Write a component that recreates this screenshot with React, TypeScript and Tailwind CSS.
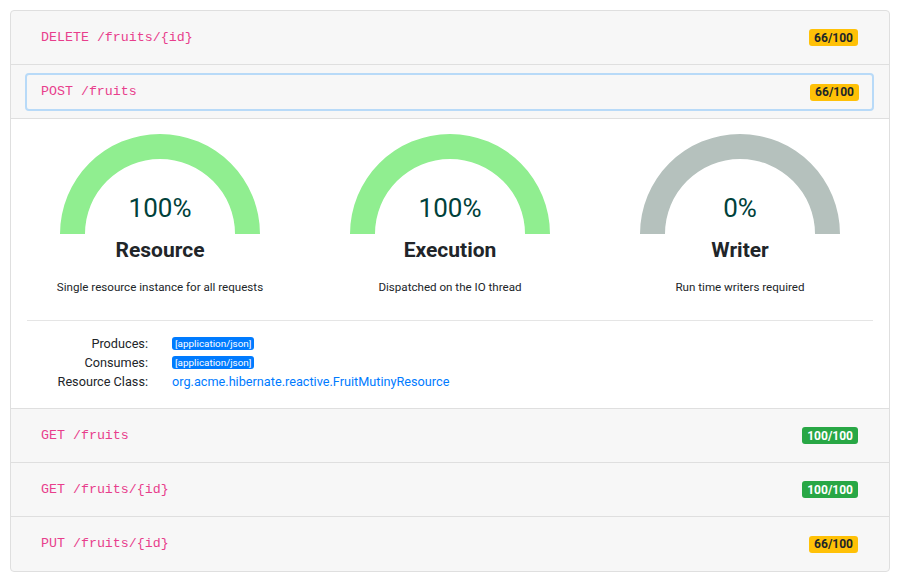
const gauges = [
  { value: 100, title: 'Resource', desc: 'Single resource instance for all requests' },
  { value: 100, title: 'Execution', desc: 'Dispatched on the IO thread' },
  { value: 0, title: 'Writer', desc: 'Run time writers required' },
]

const ok = 'bg-[#28a745] text-white'
const warn = 'bg-[#ffc107] text-[#212529]'

function Score({ score }: { score: number }) {
  return (
    <span
      className={`inline-flex items-center h-[17px] px-[5px] rounded-[3px] text-[12px] font-bold leading-none ${
        score === 100 ? ok : warn
      }`}
    >
      {score}/100
    </span>
  )
}

function Endpoint({ method, path }: { method: string; path: string }) {
  return (
    <code className="text-[13.3px] text-[#e83e8c] font-['Liberation_Mono',monospace]">
      {method} {path}
    </code>
  )
}

function Gauge({ value, title, desc }: { value: number; title: string; desc: string }) {
  return (
    <div className="flex flex-col items-center">
      <div className="relative w-[200px] h-[100px]">
        <svg width="200" height="100" viewBox="0 0 200 100">
          <path
            d="M0,100 A100,100 0 0 1 200,100 L175,100 A75,75 0 0 0 25,100 Z"
            fill={value > 0 ? '#90ee90' : '#b5c1bd'}
          />
        </svg>
        <div className="absolute left-0 right-0 top-[58px] text-center text-[26px] leading-[32px] text-[#00413a]">
          {value}%
        </div>
      </div>
      <div className="mt-[2px] text-[21px] leading-[28px] font-bold text-[#212529]">{title}</div>
      <div className="mt-[15px] text-[11.6px] leading-[16px] text-[#212529]">{desc}</div>
    </div>
  )
}

function Mime() {
  return (
    <span className="bg-[#007bff] text-white text-[9.9px] leading-[13px] px-[3px] rounded-[3px]">
      [application/json]
    </span>
  )
}

export default function App() {
  return (
    <div className="pt-[10px] pl-[10px] font-['Roboto',sans-serif]">
      <div className="w-[880px] border border-[#dfdfdf] rounded-[4px] bg-[#f7f7f7] overflow-hidden">
        <div className="h-[54px] pl-[30px] pr-[31px] flex items-center justify-between border-b border-[#dfdfdf]">
          <Endpoint method="DELETE" path="/fruits/{id}" />
          <Score score={66} />
        </div>
        <div className="h-[54px] pl-[14px] pr-[15px] py-[8px] border-b border-[#dfdfdf]">
          <div className="h-[38px] border-2 border-[#b8daf8] rounded-[4px] pl-[14px] pr-[13px] flex items-center justify-between">
            <Endpoint method="POST" path="/fruits" />
            <Score score={66} />
          </div>
        </div>
        <div className="bg-white pt-[15px] pb-[17px] border-b border-[#dfdfdf]">
          <div className="grid grid-cols-3 px-[4px]">
            {gauges.map((g) => (
              <Gauge key={g.title} {...g} />
            ))}
          </div>
          <div className="mx-[16px] mt-[25px] border-t border-[#e5e5e5]" />
          <div className="ml-[16px] mt-[13px] grid grid-cols-[121px_1fr] gap-x-[24px] text-[12.7px] leading-[19px] text-[#212529]">
            <div className="text-right">Produces:</div>
            <div className="flex items-center">
              <Mime />
            </div>
            <div className="text-right">Consumes:</div>
            <div className="flex items-center">
              <Mime />
            </div>
            <div className="text-right">Resource Class:</div>
            <div className="text-[#007bff]">org.acme.hibernate.reactive.FruitMutinyResource</div>
          </div>
        </div>
        <div className="h-[54px] pl-[30px] pr-[31px] flex items-center justify-between border-b border-[#dfdfdf]">
          <Endpoint method="GET" path="/fruits" />
          <Score score={100} />
        </div>
        <div className="h-[54px] pl-[30px] pr-[31px] flex items-center justify-between border-b border-[#dfdfdf]">
          <Endpoint method="GET" path="/fruits/{id}" />
          <Score score={100} />
        </div>
        <div className="h-[54px] pl-[30px] pr-[31px] flex items-center justify-between">
          <Endpoint method="PUT" path="/fruits/{id}" />
          <Score score={66} />
        </div>
      </div>
    </div>
  )
}
